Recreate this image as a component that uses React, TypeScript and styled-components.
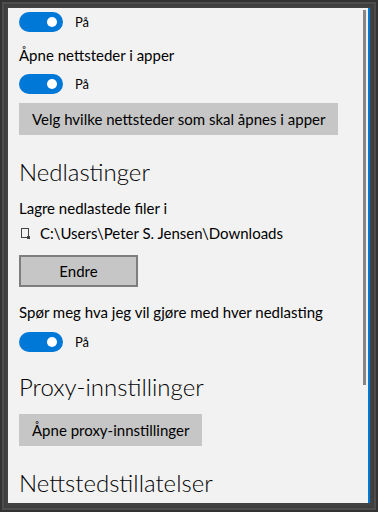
import React from "react";
import styled, { createGlobalStyle } from "styled-components";

const Global = createGlobalStyle`
  html, body { margin: 0; padding: 0; background: #3d3d3d; }
  * { box-sizing: border-box; }
`;

const Frame = styled.div`
  width: 378px;
  height: 512px;
  padding: 8px 8px 9px 8px;
  background: #424242;
  box-shadow: inset 0 0 0 2px #333333, inset 0 0 0 4px #4d4d4d, inset 0 0 0 6px #3e3e3e;
  overflow: hidden;
  display: flex;
`;

const Panel = styled.div`
  flex: 1;
  display: flex;
  background: #f2f2f2;
  border-right: 2px solid #0078d7;
  overflow: hidden;
`;

const Content = styled.div`
  flex: 1;
  padding: 4px 0 0 11px;
  display: flex;
  flex-direction: column;
  align-items: flex-start;
  font-family: Lato, "Noto Sans", sans-serif;
  color: #000;
`;

const ScrollTrack = styled.div`
  width: 5px;
  padding-top: 2px;
  background: #f2f2f2;
  display: flex;
  flex-direction: column;
`;

const Thumb = styled.div`
  width: 3px;
  height: 375px;
  background: #868686;
`;

const ToggleRow = styled.div<{ $mt?: number }>`
  margin-top: ${(p) => p.$mt ?? 0}px;
  display: flex;
  align-items: center;
  gap: 12px;
  height: 20px;
`;

const Switch = styled.div`
  width: 44px;
  height: 20px;
  border-radius: 10px;
  background: #0078d7;
  display: flex;
  align-items: center;
  justify-content: flex-end;
  padding-right: 6px;
`;

const Knob = styled.div`
  width: 10px;
  height: 10px;
  border-radius: 50%;
  background: #ffffff;
`;

const State = styled.span`
  font-size: 13px;
  line-height: 20px;
`;

const Label = styled.div<{ $mt: number }>`
  margin-top: ${(p) => p.$mt}px;
  font-size: 15px;
  line-height: 20px;
  white-space: nowrap;
`;

const Heading = styled.h2<{ $mt: number }>`
  margin: ${(p) => p.$mt}px 0 0 0;
  font-size: 24px;
  font-weight: 300;
  line-height: 32px;
  white-space: nowrap;
`;

const Button = styled.div<{ $mt: number; $w?: number; $bordered?: boolean }>`
  margin-top: ${(p) => p.$mt}px;
  height: 32px;
  ${(p) => (p.$w ? `width: ${p.$w}px;` : "")}
  padding: 0 11px;
  display: flex;
  align-items: center;
  justify-content: center;
  background: #c6c6c6;
  border: 2px solid ${(p) => (p.$bordered ? "#7e7e7e" : "#c6c6c6")};
  font-size: 15px;
  white-space: nowrap;
`;

const PathRow = styled.div<{ $mt: number }>`
  margin-top: ${(p) => p.$mt}px;
  display: flex;
  align-items: center;
  gap: 10px;
  padding-left: 2px;
  font-size: 15px;
  line-height: 20px;
  white-space: nowrap;
`;

const Toggle = ({ mt }: { mt?: number }) => (
  <ToggleRow $mt={mt}>
    <Switch>
      <Knob />
    </Switch>
    <State>På</State>
  </ToggleRow>
);

const FolderGlyph = () => (
  <svg width="9" height="11" viewBox="0 0 9 11">
    <rect x="0.5" y="0.5" width="7" height="9" fill="none" stroke="#444" strokeWidth="1" />
    <rect x="6" y="8" width="3" height="3" fill="#444" />
  </svg>
);

export default function App() {
  return (
    <>
      <Global />
      <Frame>
        <Panel>
          <Content>
            <Toggle />
            <Label $mt={13}>Åpne nettsteder i apper</Label>
            <Toggle mt={9} />
            <Button $mt={9}>Velg hvilke nettsteder som skal åpnes i apper</Button>
            <Heading $mt={21}>Nedlastinger</Heading>
            <Label $mt={10}>Lagre nedlastede filer i</Label>
            <PathRow $mt={5}>
              <FolderGlyph />
              <span>C:\Users\Peter S. Jensen\Downloads</span>
            </PathRow>
            <Button $mt={12} $w={119} $bordered>
              Endre
            </Button>
            <Label $mt={15}>Spør meg hva jeg vil gjøre med hver nedlasting</Label>
            <Toggle mt={10} />
            <Heading $mt={19}>Proxy-innstillinger</Heading>
            <Button $mt={11}>Åpne proxy-innstillinger</Button>
            <Heading $mt={21}>Nettstedstillatelser</Heading>
          </Content>
          <ScrollTrack>
            <Thumb />
          </ScrollTrack>
        </Panel>
      </Frame>
    </>
  );
}
